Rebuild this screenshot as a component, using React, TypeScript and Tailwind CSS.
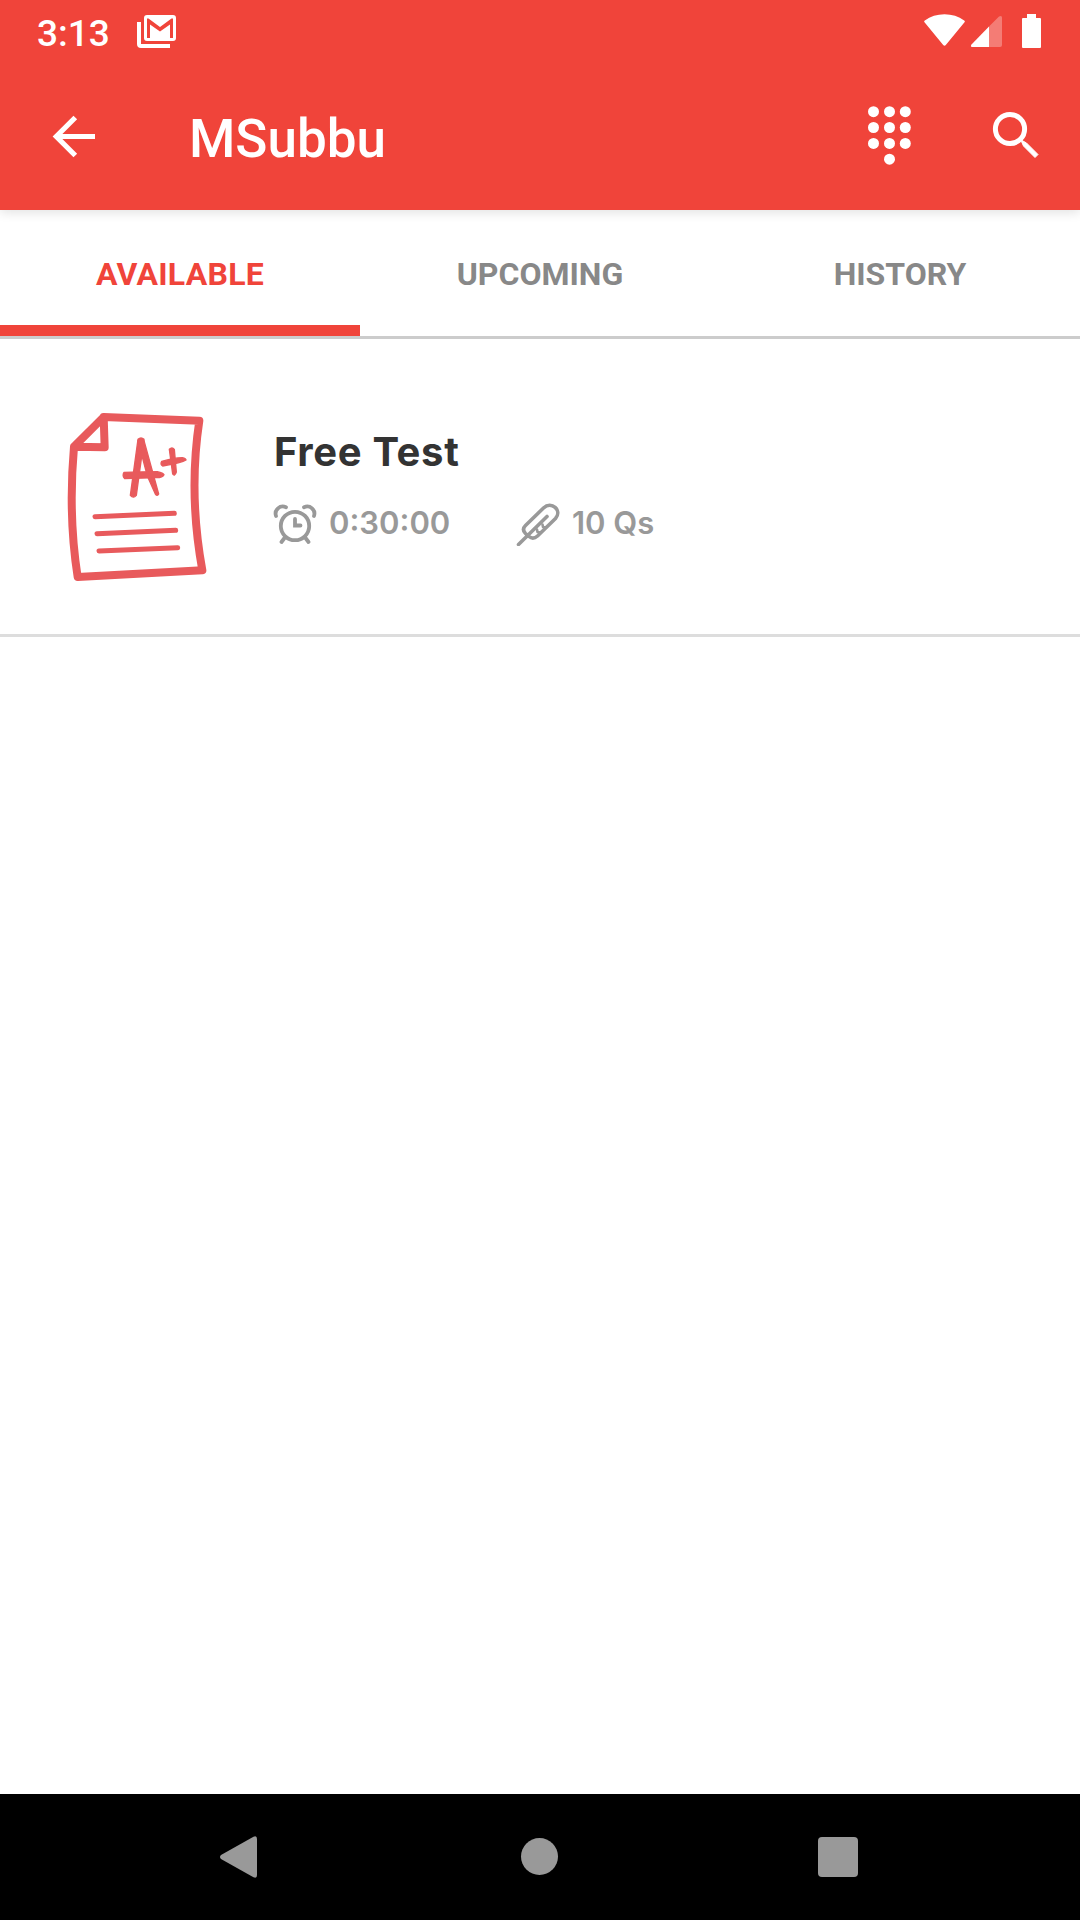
import React from "react";

function StatusBar() {
  return (
    <div className="flex h-[66px] items-center pl-[37px] text-white">
      <span className="w-[100px] text-[37px] leading-none font-medium">3:13</span>
      <svg className="-mt-[4px] h-[34px] w-[40px]" viewBox="137 14 40 34" fill="#fff">
        <path d="M137 22h4v22h29v4h-29q-4 0-4-4z" />
        <path
          fillRule="evenodd"
          d="M147 15h26q3 0 3 3v20q0 3-3 3h-26q-3 0-3-3V18q0-3 3-3zM147 18.500V38h3V24.500l10 7 10-7V38h3V18.500h-1.500L160 27l-11.500-8.500z"
        />
      </svg>
      <svg className="-mt-[4px] mr-[38px] ml-auto h-[36px] w-[118px]" viewBox="924 13 118 36" fill="#fff">
        <path d="M924.500 22.200q-.8-1 .3-1.800 8.500-6.200 19.700-6.200t19.700 6.200q1.100.8.3 1.800L945.800 45q-1.300 1.300-2.600 0z" />
        <path d="M989 26.500V47h-17q-2-.5-.5-2.500z" />
        <path d="M989 26.500l10-10q3-1.500 3 1V45q0 2-2 2h-11z" opacity=".3" />
        <path d="M1027 14h9v4h4q1 0 1 1v28q0 1-1 1h-17q-1 0-1-1V19q0-1 1-1h4z" />
      </svg>
    </div>
  );
}

const DOTS = [
  [873.5, 111.7], [889.5, 111.7], [905.3, 111.7],
  [873.5, 127.5], [889.5, 127.5], [905.3, 127.5],
  [873.5, 143.4], [889.5, 143.4], [905.3, 143.4],
  [889.5, 159.2],
];

function AppBar() {
  return (
    <div className="flex h-[144px] items-center text-white">
      <svg className="-mt-[3px] ml-[52px] h-[43px] w-[44px]" viewBox="52 115 44 43" fill="none" stroke="#fff" strokeWidth="5.200">
        <path d="M95 136.500H56M75.300 117.500l-19 19 19 19" />
      </svg>
      <h1 className="mt-[2px] ml-[93px] text-[53px] leading-none font-medium">MSubbu</h1>
      <svg className="-mt-[4px] ml-auto h-[60px] w-[44px]" viewBox="868 106 44 60" fill="#fff">
        {DOTS.map(([x, y]) => (
          <circle key={`${x}-${y}`} cx={x} cy={y} r="5.500" />
        ))}
      </svg>
      <svg className="-mt-[6px] mr-[40px] ml-[80px] h-[48px] w-[48px]" viewBox="992 111 48 48" fill="none" stroke="#fff">
        <circle cx="1010" cy="129" r="14.600" strokeWidth="5" />
        <path d="M1022 140.500l4.500 2.500 11.500 11.500-3 3L1023.500 146l-2-4.500z" fill="#fff" strokeWidth="1" />
      </svg>
    </div>
  );
}

function Tabs() {
  return (
    <nav className="grid h-[129px] grid-cols-3 border-b-[3px] border-[#ccc] text-center text-[32px] leading-[128px] font-bold text-[#888]">
      <div className="h-[126px] border-b-[11px] border-[#f0443a] tracking-[0.25px] text-[#f0443a]">AVAILABLE</div>
      <div>UPCOMING</div>
      <div>HISTORY</div>
    </nav>
  );
}

function PaperIcon() {
  return (
    <svg className="h-[190px] w-[180px]" viewBox="0 0 540 570" fill="none" stroke="#e85a5c" strokeLinecap="round" strokeLinejoin="round">
      <path strokeWidth="24" d="M161 51L448 62Q415 280 457 511L83 531Q54 345 72 140zM161 51L164 142L72 140" />
      <path strokeWidth="15" d="M135 350L373 340M141 401L377 391M147 453L383 443" />
      <g fill="#e85a5c" stroke="#e85a5c" strokeWidth="4">
        <path d="M264 118q9-8 18 0L259 286q-9 11-18 0z" />
        <path d="M264 122q9-6 18 0L326 282q-4 8-10 0L292 228z" />
        <path d="M222 217q50-2 100-2 18 4 20 9-4 9-22 9l-96 3q-8-9-2-19z" />
        <path d="M358 148q8-8 15 0l6 68q-5 15-11 6z" />
        <path d="M335 184q35-10 62-11 12 3 11 7-12 8-70 18-8-5-3-14z" />
      </g>
    </svg>
  );
}

function AlarmIcon() {
  return (
    <svg className="mt-[1px] h-[44px] w-[44px]" viewBox="273 501 44 44" fill="none" stroke="#999" strokeWidth="3.800" strokeLinecap="round">
      <circle cx="295" cy="525" r="14.200" />
      <path d="M295 518v6.500h5.500M284.500 537l-3 4M305.500 537l3 4M276 515c-2-6 4-11.500 10-8.800M314 515c2-6-4-11.500-10-8.800" />
    </svg>
  );
}

function FeatherIcon() {
  return (
    <svg className="mt-[2px] h-[44px] w-[44px]" viewBox="516 502 44 44" fill="none" stroke="#999" strokeLinecap="round" strokeLinejoin="round">
      <path strokeWidth="3.600" d="M518.500 544.500L547 516.500M525.500 525.500L543.500 508c8-7.500 19 2.500 12 10.500L537.500 536q-4.500 4-8.500 .5l-3.500-3q-4-4 0-8z" />
      <path strokeWidth="2.600" d="M537 529.500l.5 2.500 3 .5M542.500 524.500l.5 2.500 3 .5" />
    </svg>
  );
}

function TestRow() {
  return (
    <article className="flex h-[298px] border-b-[3px] border-[#ddd] pt-[61px]">
      <div className="ml-[50px]">
        <PaperIcon />
      </div>
      <div className="ml-[43px] font-['Inter',sans-serif] font-semibold">
        <h2 className="mt-[30px] pl-[1px] text-[40px] leading-[44px] font-bold tracking-[0.65px] text-[#333]">Free Test</h2>
        <div className="mt-[27px] flex h-[44px] items-center text-[31px] text-[#999]">
          <AlarmIcon />
          <span className="ml-[12px] w-[187px]">0:30:00</span>
          <FeatherIcon />
          <span className="ml-[12px]">10 Qs</span>
        </div>
      </div>
    </article>
  );
}

function NavBar() {
  return (
    <div className="flex h-[126px] items-center bg-black">
      <svg className="ml-[220px] h-[42px] w-[38px]" viewBox="0 0 38 42" fill="#999">
        <path d="M1 19L33.500 .8Q37 -.8 37 3V39Q37 42.800 33.500 41.200L1 23Q-1 21 1 19z" />
      </svg>
      <div className="-mt-[2px] ml-[263px] h-[37px] w-[37px] rounded-full bg-[#999]" />
      <div className="ml-[260px] h-[40px] w-[40px] rounded-[4px] bg-[#999]" />
    </div>
  );
}

export default function App() {
  return (
    <div className="flex h-[1920px] w-[1080px] flex-col overflow-hidden bg-white font-['Roboto',sans-serif]">
      <header className="relative bg-[#f0443a] shadow-[0_3px_10px_rgba(0,0,0,0.110)]">
        <StatusBar />
        <AppBar />
      </header>
      <Tabs />
      <main className="flex-1">
        <TestRow />
      </main>
      <NavBar />
    </div>
  );
}
